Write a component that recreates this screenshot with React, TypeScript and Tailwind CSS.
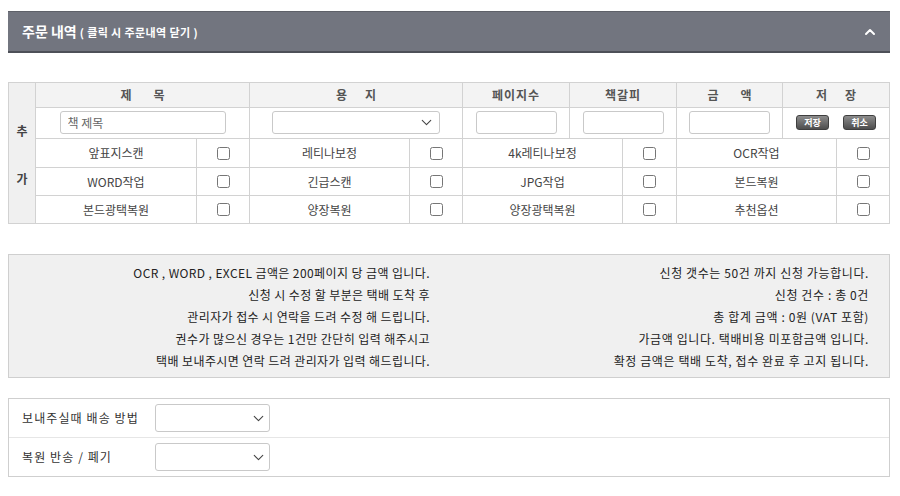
import React from 'react';
import { ChevronDown, ChevronUp } from 'lucide-react';

const font = { fontFamily: '"Noto Sans CJK KR", "Noto Sans", sans-serif' };

const options = [
    ['앞표지스캔', '레티나보정', '4k레티나보정', 'OCR작업'],
    ['WORD작업', '긴급스캔', 'JPG작업', '본드복원'],
    ['본드광택복원', '양장복원', '양장광택복원', '추천옵션'],
];

const leftNotes = [
    'OCR , WORD , EXCEL 금액은 200페이지 당 금액 입니다.',
    '신청 시 수정 할 부분은 택배 도착 후',
    '관리자가 접수 시 연락을 드려 수정 해 드립니다.',
    '권수가 많으신 경우는 1건만 간단히 입력 해주시고',
    '택배 보내주시면 연락 드려 관리자가 입력 해드립니다.',
];

const rightNotes = [
    '신청 갯수는 50건 까지 신청 가능합니다.',
    '신청 건수 : 총 0건',
    '총 합계 금액 : 0원 (VAT 포함)',
    '가금액 입니다. 택배비용 미포함금액 입니다.',
    '확정 금액은 택배 도착, 접수 완료 후 고지 됩니다.',
];

const Spaced: React.FC<{ chars: string[]; gap: string }> = ({ chars, gap }) => (
    <div className={`flex justify-center ${gap}`}>
        {chars.map((c, i) => (
            <span key={i}>{c}</span>
        ))}
    </div>
);

const FakeSelect: React.FC<{ className: string }> = ({ className }) => (
    <div className={`flex items-center justify-end bg-white border border-[#c9c9c9] rounded-[3px] ${className}`}>
        <ChevronDown className="w-[17px] h-[17px] text-[#444]" strokeWidth={1.5} />
    </div>
);

const SmallButton: React.FC<{ label: string }> = ({ label }) => (
    <button className="w-[33px] h-[15px] rounded-[3px] border border-[#3f3f3f] bg-gradient-to-b from-[#8d8d8d] to-[#4e4e4e] text-[9px] leading-[13px] text-white font-bold">
        {label}
    </button>
);

export default function App() {
    return (
        <div className="w-[900px] h-[496px] bg-white pt-[11px] px-[8px] text-[#333]" style={font}>
            {/* Header */}
            <div className="w-[882px] h-[42px] bg-[#72757f] border-t border-[#5e6169] border-b-2 border-b-[#4d5058] flex items-center justify-between pl-[14px] pr-[12px]">
                <div className="flex items-baseline text-white font-bold">
                    <span className="text-[14px]">주문 내역</span>
                    <span className="text-[11px] ml-[3px] tracking-[0.4px]">( 클릭 시 주문내역 닫기 )</span>
                </div>
                <ChevronUp className="w-[16px] h-[16px] text-white" strokeWidth={3} />
            </div>

            {/* Option table */}
            <div className="mt-[29px] w-[882px] h-[142px] flex border border-[#d2d2d2] text-[12px]">
                <div className="w-[29px] bg-[#f0f0f0] flex flex-col items-center justify-center gap-[30px] pt-[4px] text-[#444] font-bold">
                    <span>추</span>
                    <span>가</span>
                </div>
                <div className="flex-1 flex flex-col border-l border-[#d2d2d2]">
                    <div className="h-[24px] grid grid-cols-[213px_213px_107px_107px_106px_107px] bg-[#f3f3f3] font-bold text-[#555]">
                        <div className="flex items-center justify-center"><Spaced chars={['제', '목']} gap="gap-[22px]" /></div>
                        <div className="flex items-center justify-center border-l border-[#d2d2d2]"><Spaced chars={['용', '지']} gap="gap-[18px]" /></div>
                        <div className="flex items-center justify-center border-l border-[#d2d2d2] tracking-[1px]">페이지수</div>
                        <div className="flex items-center justify-center border-l border-[#d2d2d2] tracking-[1px]">책갈피</div>
                        <div className="flex items-center justify-center border-l border-[#d2d2d2]"><Spaced chars={['금', '액']} gap="gap-[22px]" /></div>
                        <div className="flex items-center justify-center border-l border-[#d2d2d2]"><Spaced chars={['저', '장']} gap="gap-[18px]" /></div>
                    </div>
                    <div className="h-[32px] grid grid-cols-[213px_213px_107px_107px_106px_107px] border-t border-[#d2d2d2]">
                        <div className="flex items-center justify-center">
                            <input
                                className="w-[166px] h-[23px] border border-[#c9c9c9] rounded-[3px] px-[7px] text-[12px] placeholder:text-[#666] outline-none"
                                placeholder="책 제목"
                            />
                        </div>
                        <div className="flex items-center justify-center border-l border-[#d2d2d2]">
                            <FakeSelect className="w-[168px] h-[23px] pr-[4px]" />
                        </div>
                        <div className="flex items-center justify-center border-l border-[#d2d2d2]">
                            <input className="w-[81px] h-[23px] border border-[#c9c9c9] rounded-[3px] outline-none" />
                        </div>
                        <div className="flex items-center justify-center border-l border-[#d2d2d2]">
                            <input className="w-[81px] h-[23px] border border-[#c9c9c9] rounded-[3px] outline-none" />
                        </div>
                        <div className="flex items-center justify-center border-l border-[#d2d2d2]">
                            <input className="w-[81px] h-[23px] border border-[#c9c9c9] rounded-[3px] outline-none" />
                        </div>
                        <div className="flex items-center justify-center gap-[14px] border-l border-[#d2d2d2]">
                            <SmallButton label="저장" />
                            <SmallButton label="취소" />
                        </div>
                    </div>
                    {options.map((row, r) => (
                        <div
                            key={r}
                            className={`${r === 2 ? 'h-[28px]' : 'h-[29px]'} grid grid-cols-[160px_53px_160px_53px_160px_54px_160px_53px] border-t border-[#d2d2d2] text-[#444]`}
                        >
                            {row.map((label, i) => (
                                <React.Fragment key={i}>
                                    <div className={`flex items-center justify-center ${i > 0 ? 'border-l border-[#d2d2d2]' : ''}`}>
                                        {label}
                                    </div>
                                    <div className="flex items-center justify-center border-l border-[#d2d2d2]">
                                        <input type="checkbox" className="w-[13px] h-[13px] m-0" />
                                    </div>
                                </React.Fragment>
                            ))}
                        </div>
                    ))}
                </div>
            </div>

            {/* Notes */}
            <div className="mt-[30px] w-[882px] h-[124px] bg-[#f0f0f0] border border-[#cfcfcf] grid grid-cols-2 pt-[7px] text-[12px] leading-[22px] text-[#222]">
                <div className="flex flex-col items-end pr-[19px] tracking-[0.4px]">
                    {leftNotes.map((t, i) => (
                        <span key={i}>{t}</span>
                    ))}
                </div>
                <div className="flex flex-col items-end pr-[20px] tracking-[0.6px]">
                    {rightNotes.map((t, i) => (
                        <span key={i}>{t}</span>
                    ))}
                </div>
            </div>

            {/* Delivery */}
            <div className="mt-[20px] w-[882px] h-[79px] border border-[#cfcfcf] flex flex-col text-[12px] text-[#333]">
                <div className="h-[39px] flex items-center border-b border-[#e6e6e6] pl-[13px]">
                    <span className="w-[133px] tracking-[1.1px]">보내주실때 배송 방법</span>
                    <FakeSelect className="w-[115px] h-[28px] pr-[2px]" />
                </div>
                <div className="flex-1 flex items-center pl-[13px]">
                    <span className="w-[133px] tracking-[1.1px]">복원 반송 / 폐기</span>
                    <FakeSelect className="w-[115px] h-[28px] pr-[2px]" />
                </div>
            </div>
        </div>
    );
}
